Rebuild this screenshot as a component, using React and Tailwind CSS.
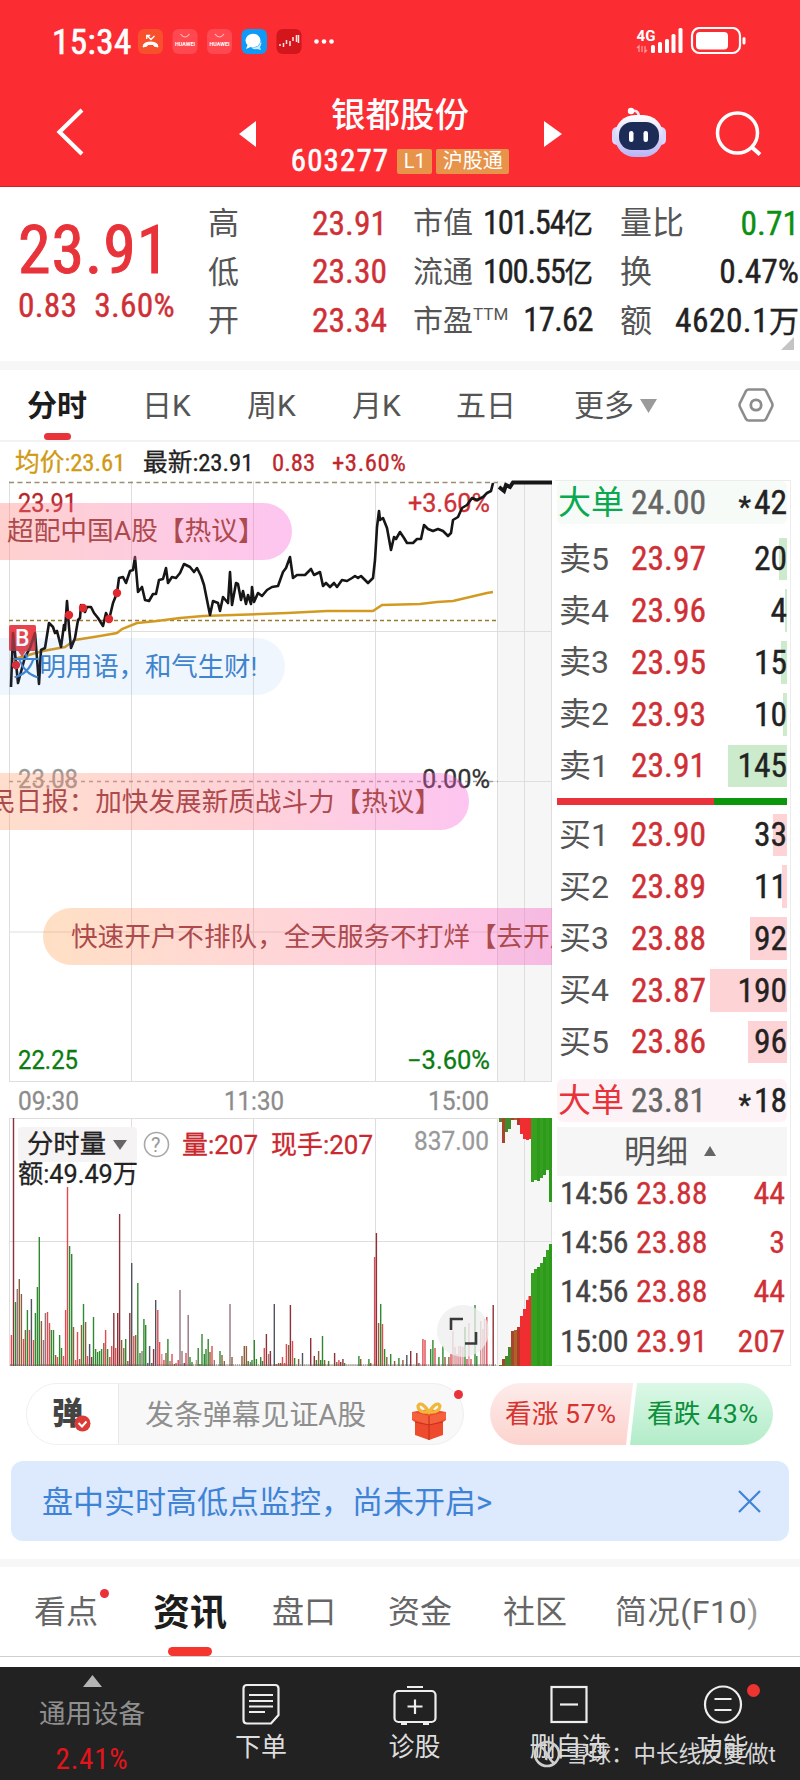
import { Fragment } from 'react';

const RED = '#c9282e';

const klineTabs = [
  { label: '日K', width: 'w-[105px]' },
  { label: '周K', width: 'w-[105px]' },
  { label: '月K', width: 'w-[104px]' },
  { label: '五日', width: 'w-[118px]' },
];

const sells = [
  { name: '卖5', price: '23.97', volume: 20, bar: 8 },
  { name: '卖4', price: '23.96', volume: 4, bar: 2 },
  { name: '卖3', price: '23.95', volume: 15, bar: 6 },
  { name: '卖2', price: '23.93', volume: 10, bar: 4 },
  { name: '卖1', price: '23.91', volume: 145, bar: 59 },
];

const buys = [
  { name: '买1', price: '23.90', volume: 33, bar: 14 },
  { name: '买2', price: '23.89', volume: 11, bar: 5 },
  { name: '买3', price: '23.88', volume: 92, bar: 37 },
  { name: '买4', price: '23.87', volume: 190, bar: 77 },
  { name: '买5', price: '23.86', volume: 96, bar: 39 },
];

const trades = [
  ['14:56', '23.88', 44],
  ['14:56', '23.88', 3],
  ['14:56', '23.88', 44],
  ['15:00', '23.91', 207],
];

const priceLine =
  '11,687 13,633 18,683 25,657 30,648 35,633 39,684 41,650 45,648 49,623 53,627 55,633 57,631 61,647 64,625 65,630 67,601 69,627 71,648 75,638 78,620 80,618 81,605 85,612 87,607 91,607 94,613 98,618 103,626 106,613 109,620 113,603 117,593 119,578 123,577 126,583 130,571 133,570 135,557 138,592 142,587 145,600 149,601 153,594 156,594 159,580 163,579 166,568 168,583 172,577 176,578 180,573 184,564 190,567 194,572 197,568 201,576 204,585 207,600 210,615 213,601 218,603 220,611 223,597 228,603 230,572 232,605 236,583 238,584 241,600 243,591 246,604 248,595 251,604 252,587 254,602 258,593 262,596 267,590 272,587 278,586 283,572 286,568 290,557 293,578 297,575 305,575 311,569 314,575 320,572 323,586 326,583 330,587 334,583 337,587 342,580 347,581 352,578 355,576 358,578 361,576 368,583 373,578 375,560 377,527 379,511 380,520 383,518 387,528 391,550 394,537 396,539 400,532 404,538 407,543 413,543 417,539 421,539 424,525 428,529 433,531 438,529 443,531 448,536 451,533 453,520 458,517 462,508 467,505 472,498 477,500 483,497 487,493 491,491 493,483';

const avgLine =
  '11,660 25,656 43,651 65,647 75,640 100,636 117,633 122,629 137,623 157,621 180,618 203,616 233,615 287,613 327,611 373,611 382,605 420,604 437,602 453,601 487,593 493,592';

const barColors = { r: '#e04a50', d: '#8e3038', g: '#2f8a2f', b: '#8a5f3a', s: '#4c5560', m: '#94757c', p: '#d98f94' };

// x, height, colour
const volumes = [
  [11.4, 31, 'r'], [13.5, 248, 'd'], [15.5, 64, 'g'], [17.3, 77, 'm'], [19.3, 87, 'b'], [21.4, 72, 'b'], [23.5, 27, 'r'], [25.4, 36, 'b'],
  [27.4, 56, 'g'], [29.4, 36, 'r'], [31.4, 67, 's'], [33.5, 26, 'r'], [35.4, 53, 'g'], [37.4, 79, 'g'], [39.3, 129, 'g'], [41.4, 45, 'b'],
  [43.5, 26, 'm'], [45.4, 53, 'm'], [47.5, 54, 'r'], [49.5, 43, 'r'], [51.4, 36, 'g'], [53.5, 36, 'g'], [55.6, 11, 'b'], [57.5, 9, 'r'],
  [59.6, 31, 'g'], [61.5, 18, 'g'], [63.5, 10, 'r'], [65.6, 56, 'r'], [67.5, 179, 'r'], [69.6, 120, 'g'], [71.7, 112, 'g'], [73.5, 39, 'b'],
  [75.6, 6, 'r'], [77.5, 34, 'r'], [79.6, 7, 'b'], [81.5, 41, 'b'], [83.5, 62, 'g'], [85.6, 44, 'b'], [87.5, 10, 'r'], [89.6, 22, 's'],
  [91.6, 9, 'd'], [93.5, 49, 'g'], [95.6, 17, 'g'], [97.6, 14, 'g'], [99.6, 15, 'g'], [101.6, 17, 'g'], [103.8, 23, 'b'], [105.6, 36, 'r'],
  [107.6, 17, 'g'], [109.8, 9, 'b'], [111.7, 20, 'r'], [113.8, 53, 'd'], [115.7, 18, 'r'], [117.7, 53, 'd'], [119.6, 152, 'd'], [121.6, 26, 'b'],
  [123.8, 18, 'b'], [125.7, 27, 'g'], [127.8, 5, 'b'], [129.8, 53, 'd'], [131.7, 103, 's'], [133.8, 30, 'r'], [135.7, 31, 'b'], [137.8, 83, 'g'],
  [140, 13, 'g'], [142, 15, 'm'], [143.9, 47, 'g'], [145.7, 41, 'g'], [147.8, 3, 's'], [149.6, 20, 's'], [151.8, 3, 's'], [153.6, 17, 'd'],
  [155.7, 66, 's'], [157.8, 56, 'r'], [159.6, 24, 'r'], [161.8, 12, 'p'], [163.9, 6, 'r'], [166, 13, 'b'], [167.9, 27, 'g'], [170, 5, 'm'],
  [172, 12, 'r'], [174.3, 2, 'g'], [176, 3, 'r'], [178.2, 6, 'r'], [180, 76, 'm'], [182, 15, 'm'], [184.3, 3, 's'], [186, 13, 'r'],
  [188.2, 51, 'm'], [190, 9, 'g'], [192, 4, 'g'], [196.4, 6, 'p'], [198.2, 18, 'g'], [200, 2, 'g'], [202, 32, 'g'], [204.3, 12, 'g'],
  [206, 17, 'g'], [208.2, 27, 'g'], [210, 14, 'b'], [212, 20, 'r'], [214.3, 6, 'm'], [220, 15, 'g'], [222, 11, 'b'], [224.3, 5, 'b'],
  [230, 62, 'm'], [232, 9, 'b'], [242, 10, 'b'], [244.3, 20, 'b'], [246.4, 20, 'b'], [248.2, 5, 'g'], [250.4, 4, 'm'], [252, 6, 'g'],
  [254.3, 26, 'g'], [256.4, 7, 'g'], [260.7, 9, 'g'], [262.5, 5, 'g'], [264.3, 18, 'r'], [266.4, 32, 'd'], [268.6, 12, 'm'], [270.4, 15, 'd'],
  [274.3, 62, 's'], [276.4, 2, 'r'], [278.6, 3, 'b'], [280.7, 3, 'b'], [282.5, 9, 'r'], [284.6, 3, 'r'], [286.4, 22, 'r'], [288.6, 21, 'b'],
  [290.4, 61, 'd'], [292.5, 25, 'r'], [294.6, 8, 'g'], [298.6, 7, 'b'], [302.5, 13, 's'], [310.7, 28, 'd'], [314.3, 10, 'd'], [316.4, 6, 'g'],
  [318.6, 15, 'b'], [320.7, 6, 'g'], [322.5, 30, 'g'], [324.6, 6, 'b'], [328.6, 5, 'g'], [334.6, 13, 'd'], [336.8, 4, 'b'], [338.9, 6, 'r'],
  [340.7, 4, 'd'], [342.9, 7, 'd'], [344.6, 3, 'g'], [358.9, 10, 'g'], [360.7, 7, 'b'], [368.9, 7, 'g'], [370.7, 3, 'b'], [374.6, 109, 'r'],
  [376.4, 133, 'd'], [378.6, 43, 'b'], [380.7, 62, 'g'], [382.5, 42, 'r'], [384.6, 17, 'g'], [386.8, 9, 'b'], [390.7, 12, 'g'], [394.6, 5, 'b'],
  [398.9, 8, 'g'], [402.9, 6, 'b'], [406.8, 11, 's'], [410.7, 15, 'd'], [416.8, 13, 'd'], [418.9, 3, 'b'], [422.9, 27, 'r'], [425, 26, 'r'],
  [430.7, 17, 'g'], [432.9, 26, 'g'], [435, 18, 'r'], [438.9, 9, 'g'], [442.9, 20, 'g'], [445, 9, 'b'], [448.9, 9, 'b'], [451, 12, 'r'],
  [452.9, 35, 'p'], [455, 19, 'p'], [457, 12, 'p'], [458.9, 20, 'p'], [460.7, 20, 'p'], [462.9, 19, 'p'], [465, 39, 'g'], [467, 7, 'r'],
  [468.9, 43, 'p'], [471, 7, 'r'], [475, 61, 'g'], [476.8, 10, 'g'], [480.7, 45, 'p'], [482.9, 37, 'p'], [484.6, 47, 'p'], [486.8, 49, 'r'],
  [493.2, 61, 'd'],
];

// x, hanging height, standing height, colour
const queue = [
  [499, 4, 1, '#5f7a2a'], [502, 25, 7, '#a8452a'], [505, 14, 10, '#3f8a2a'], [508, 11, 19, '#3f8a2a'], [511, 2, 35, '#a8452a'],
  [514, 2, 36, '#a8652a'], [517, 7, 39, '#b8352a'], [520, 16, 50, '#f02d30'], [523, 21, 57, '#f02d30'], [526, 22, 66, '#f02d30'],
  [528.5, 21, 70, '#f02d30'], [531, 64, 93, '#37a020'], [534, 62, 97, '#37a020'], [537, 63, 99, '#2c9a1a'], [540, 60, 103, '#37a020'],
  [543, 57, 109, '#2c9a1a'], [546, 52, 116, '#37a020'], [549, 84, 122, '#2c9a1a'],
];

function StatusBar() {
  return (
    <div className="flex h-[84px] items-center pl-[52px] text-white">
      <span className="w-[86px] text-[35px] tracking-[0.5px] [font-stretch:75%] [-webkit-text-stroke:0.7px]">15:34</span>
      <svg width="204" height="28" viewBox="0 0 204 28">
        <rect x="0" y="1" width="25" height="25" rx="6" fill="#f8502c" />
        <path d="M5 19 Q5 15.500 8.500 14.500 Q12.500 13.500 16.500 14.500 Q20 15.500 20 19 L16 18 L15.500 16.500 H9.500 L9 18z" fill="#fff" stroke="#fff" strokeWidth="1" strokeLinejoin="round" />
        <path d="M9 7.500 l4 4 3.500-3.500 M8.700 11 V7.500 h3.500" stroke="#fff" strokeWidth="1.300" fill="none" />
        {[34.5, 69].map((x) => (
          <g key={x}>
            <rect x={x} y="1" width="25" height="25" rx="6" fill="#ff4850" />
            <path d={`M${x + 8} 6 q4.500 6 9 0`} stroke="#ffb9bb" strokeWidth="1.200" fill="none" />
            <text x={x + 2.5} y="17.500" fontSize="5.500" fontWeight="700" fill="#fff" textLength="20" lengthAdjust="spacingAndGlyphs">HUAWEI</text>
          </g>
        ))}
        <rect x="103.500" y="1" width="25.500" height="25" rx="6" fill="#0f9af5" />
        <ellipse cx="115" cy="12.500" rx="7.500" ry="6.800" fill="#fff" />
        <path d="M110 16 l-2 5 7-3z" fill="#fff" />
        <path d="M113 19 q8 2 10 -6 q1 3 -1 6 l1 3 -4 -1 q-4 1 -6 -2z" fill="#c8ecff" />
        <rect x="138.500" y="1" width="25" height="25" rx="6" fill="#d3151c" />
        <path d="M142 18 v-2 M145.500 19 v-4 M148.500 16 v-4 M152 18 v-5 M155 13 v-4 M158.500 14 v-7 M160.500 15 v-8" stroke="#ffe3e3" strokeWidth="1.500" />
        <circle cx="178.500" cy="13.500" r="2.300" fill="#fff" />
        <circle cx="186" cy="13.500" r="2.300" fill="#fff" />
        <circle cx="193.500" cy="13.500" r="2.300" fill="#fff" />
      </svg>
      <svg className="ml-[294px]" width="112" height="30" viewBox="0 0 112 30">
        <text x="0.500" y="14" fontSize="15" fontWeight="700" fill="#fff" textLength="19" lengthAdjust="spacingAndGlyphs">4G</text>
        <path d="M3 25 v-6 l-2 2 M6 19 v6 M9 19 v6 l2-2" stroke="#ff9a9c" strokeWidth="1.300" fill="none" />
        {[[15, 18], [22, 15], [29, 12], [35.5, 7], [42.5, 1]].map(([x, y]) => (
          <rect key={x} x={x} y={y} width="4" height={26 - y} rx="1.500" fill="#fff" />
        ))}
        <rect x="56" y="1" width="48" height="25" rx="7.500" fill="none" stroke="#fff" strokeWidth="2.200" />
        <rect x="60" y="5" width="32" height="17.500" rx="4" fill="#fff" />
        <rect x="106.500" y="10" width="3" height="7.500" rx="1.500" fill="#fff" />
      </svg>
    </div>
  );
}

function TitleBar() {
  return (
    <div className="flex h-[103px] items-start text-white">
      <svg className="ml-[54px] mt-[22px]" width="32" height="52" viewBox="0 0 32 52">
        <path d="M28 4 L5.500 26 L28 48" fill="none" stroke="#fff" strokeWidth="4.200" />
      </svg>
      <svg className="ml-[153px] mt-[37px]" width="18" height="26" viewBox="0 0 18 26">
        <path d="M0 13 L17 0 V26z" fill="#fff" />
      </svg>
      <div className="ml-[29px] flex w-[228px] flex-col items-center">
        <div className="mt-[13px] text-[34.500px] font-medium leading-[36px]">银都股份</div>
        <div className="mt-[13px] flex items-center gap-1">
          <span className="mr-1 text-[31px] leading-[30px] tracking-[1.100px] [font-stretch:75%] [-webkit-text-stroke:0.6px]">603277</span>
          <span className="flex h-[25px] w-[35px] items-center justify-center rounded-xs bg-[#e8934a] text-[20px]">L1</span>
          <span className="flex h-[25px] w-[73px] items-center justify-center rounded-xs bg-[#e8934a] text-[20px]">沪股通</span>
        </div>
      </div>
      <svg className="ml-[30px] mt-[37px]" width="19" height="26" viewBox="0 0 19 26">
        <path d="M18 13 L0 0 V26z" fill="#fff" />
      </svg>
      <svg className="ml-[49px] mt-[22px]" width="54" height="52" viewBox="0 0 54 52">
        <defs>
          <linearGradient id="head" x1="0" y1="0" x2="0" y2="1">
            <stop offset="0" stopColor="#ffffff" />
            <stop offset="1" stopColor="#b9b4f5" />
          </linearGradient>
        </defs>
        <path d="M19 5 Q27 3 27 12" stroke="#f4e8f8" strokeWidth="2.500" fill="none" />
        <circle cx="19" cy="5" r="3.200" fill="#fff" />
        <rect x="0" y="21" width="10" height="18" rx="5" fill="#d9d5fb" />
        <rect x="44" y="21" width="10" height="18" rx="5" fill="#d9d5fb" />
        <rect x="3" y="9" width="48" height="42" rx="20" fill="url(#head)" />
        <rect x="7" y="16" width="40" height="28" rx="13" fill="#1d2b57" />
        <rect x="17" y="25" width="4.500" height="11" rx="2.200" fill="#fff" />
        <rect x="31.500" y="25" width="4.500" height="11" rx="2.200" fill="#fff" />
      </svg>
      <svg className="ml-[49px] mt-[26px]" width="48" height="48" viewBox="0 0 48 48">
        <circle cx="22.500" cy="23" r="20" fill="none" stroke="#fff" strokeWidth="3.500" />
        <path d="M35.500 36 L45 44.500" stroke="#fff" strokeWidth="4" />
      </svg>
    </div>
  );
}

function QuoteColumn({ className, children }) {
  return <div className={`flex h-[158px] flex-col pt-[12px] leading-none [font-stretch:75%] ${className}`}>{children}</div>;
}

function QuoteRow({ label, size, color = 'text-[#222]', children }) {
  return (
    <div className="flex flex-1 items-center justify-between">
      <span className={`flex text-[#555] ${size}`}>{label}</span>
      <span className={`[-webkit-text-stroke:0.4px] ${color}`}>{children}</span>
    </div>
  );
}

function Quote() {
  return (
    <div className="relative flex h-[174px] bg-white whitespace-nowrap">
      <div className="w-[208px] pl-[18px] text-[#e8333a]">
        <div className="mt-[31px] text-[66px] leading-[66px] tracking-[0.900px] [font-stretch:75%] [-webkit-text-stroke:1px]">23.91</div>
        <div className="mt-[4px] flex gap-[17px] text-[33.500px] leading-[36px] tracking-[0.200px] text-[#cf3036] [font-stretch:75%] [-webkit-text-stroke:0.4px]">
          <span>0.83</span>
          <span>3.60%</span>
        </div>
      </div>
      <QuoteColumn className="w-[179px] text-[33.500px]">
        <QuoteRow label="高" size="text-[31px]" color="text-[#cf3036]">23.91</QuoteRow>
        <QuoteRow label="低" size="text-[31px]" color="text-[#cf3036]">23.30</QuoteRow>
        <QuoteRow label="开" size="text-[31px]" color="text-[#cf3036]">23.34</QuoteRow>
      </QuoteColumn>
      <QuoteColumn className="ml-[26px] w-[180px] text-[32.500px]">
        <QuoteRow label="市值" size="text-[30px]"><span className="tracking-[-1.200px]">101.54</span><span className="text-[28.500px]">亿</span></QuoteRow>
        <QuoteRow label="流通" size="text-[30px]"><span className="tracking-[-1.200px]">100.55</span><span className="text-[28.500px]">亿</span></QuoteRow>
        <QuoteRow label={<>市盈<span className="text-[17px] [font-stretch:100%]">TTM</span></>} size="text-[30px]"><span className="tracking-[-0.600px]">17.62</span></QuoteRow>
      </QuoteColumn>
      <QuoteColumn className="ml-[27px] w-[179px] text-[33.500px]">
        <QuoteRow label="量比" size="text-[32px]" color="text-[#0c8f12]">0.71</QuoteRow>
        <QuoteRow label="换" size="text-[32px]">0.47%</QuoteRow>
        <QuoteRow label="额" size="text-[32px]"><span className="tracking-[0.400px]">4620.1</span><span className="text-[30px]">万</span></QuoteRow>
      </QuoteColumn>
      <svg className="absolute right-[6px] bottom-[11px]" width="13" height="13" viewBox="0 0 13 13">
        <path d="M13 0 V13 H0z" fill="#c4c4c4" />
      </svg>
    </div>
  );
}

function PeriodTabs() {
  return (
    <div className="flex h-[72px] items-center border-b-2 border-[#f2f2f2] bg-white pl-[27px] text-[30px] leading-none text-[#555]">
      <div className="relative flex h-full w-[115px] items-center pt-[2px] font-bold text-[#1d1d1d]">
        分时
        <span className="absolute bottom-0 left-[17px] h-[7px] w-[27px] rounded-full bg-[#e8333a]" />
      </div>
      {klineTabs.map((tab) => (
        <div key={tab.label} className={`pt-[2px] ${tab.width}`}>{tab.label}</div>
      ))}
      <div className="flex w-[163px] items-center gap-[6px] pt-[2px]">
        更多
        <svg width="17" height="14" viewBox="0 0 17 14"><path d="M0 0 H17 L8.500 14z" fill="#9a9a9a" /></svg>
      </div>
      <svg width="38" height="36" viewBox="0 0 38 36">
        <path d="M11.500 2.500 H26.500 Q28 2.500 29 4 L35 16 Q36 18 35 20 L29 32 Q28 33.500 26.500 33.500 H11.500 Q10 33.500 9 32 L3 20 Q2 18 3 16 L9 4 Q10 2.500 11.500 2.500z" fill="none" stroke="#8c8c8c" strokeWidth="2.600" />
        <circle cx="19" cy="18" r="5.200" fill="none" stroke="#8c8c8c" strokeWidth="2.800" />
      </svg>
    </div>
  );
}

function Label({ x, y, w, fill, size = 25, children }) {
  return (
    <text x={x} y={y} fill={fill} stroke={fill} strokeWidth="0.300" fontSize={size} textLength={w} lengthAdjust="spacingAndGlyphs">
      {children}
    </text>
  );
}

function Charts() {
  return (
    <div className="relative h-[888px] w-[552px] overflow-hidden">
      <svg className="block" width="552" height="888" viewBox="0 480 552 888">
        <rect x="498" y="481" width="54" height="600" fill="#f6f6f6" />
        <rect x="498" y="1118" width="54" height="248" fill="#f6f6f6" />
        <g stroke="#dedede" strokeWidth="1">
          {[9.5, 131.5, 253.5, 375.5, 497.5, 524.5, 551.5].map((x) => (
            <path key={x} d={`M${x} 481 V1081 M${x} 1118 V1366`} />
          ))}
          <path d="M9 631.500 H552 M9 932 H552 M9 1081.500 H552 M9 1118.500 H552 M9 1241.500 H552 M9 1365.500 H552 M490 781.500 H552" />
        </g>
        <path d="M9 482.500 H498" stroke="#9a8f70" strokeWidth="1.300" strokeDasharray="5 3.500" />
        <path d="M9 620.500 H498" stroke="#9a7a30" strokeWidth="1.500" strokeDasharray="4 3" />
        <path d="M9 781.500 H498" stroke="#a0a0a0" strokeWidth="1.300" strokeDasharray="4 4" />

        <polyline points={avgLine} fill="none" stroke="#d39a22" strokeWidth="2.500" />
        <Label x="18" y="512" w="59" fill="#b8242a">23.91</Label>
        <Label x="408" y="512" w="82" fill="#cf3036">+3.60%</Label>
        <path d="M11 625 H34 Q36 625 36 627 V649 Q36 651 34 651 H26 L22 657 L18 651 H11 Q9 651 9 649 V627 Q9 625 11 625z" fill="#e8484e" />
        <polyline points={priceLine} fill="none" stroke="#161616" strokeWidth="2.600" strokeLinejoin="round" />
        <path d="M11 625 H34 Q36 625 36 627 V649 Q36 651 34 651 H11 Q9 651 9 649 V627 Q9 625 11 625z" fill="#e8404a" fillOpacity="0.600" />
        <path d="M499 487 L504 491 L506 485 L510 487 L513 482.500 H552" fill="none" stroke="#161616" strokeWidth="4" />
        {[[69, 615], [83, 608], [109, 619], [117, 593], [16, 665]].map(([x, y]) => (
          <circle key={x} cx={x} cy={y} r="4.200" fill="#e0282e" />
        ))}
        <text x="15" y="646" fontSize="23" fontWeight="500" fill="#fff">B</text>

        <Label x="18" y="788" w="60" fill="#999">23.08</Label>
        <Label x="422" y="788" w="68" fill="#333">0.00%</Label>
        <Label x="18" y="1069" w="60" fill="#0b7d10">22.25</Label>
        <Label x="407" y="1069" w="83" fill="#0b7d10">−3.60%</Label>
        <Label x="18" y="1110" w="61" fill="#8c8c8c" size="26">09:30</Label>
        <Label x="224" y="1110" w="60" fill="#8c8c8c" size="26">11:30</Label>
        <Label x="428" y="1110" w="61" fill="#8c8c8c" size="26">15:00</Label>

        {volumes.map(([x, h, c]) => (
          <rect key={x} x={x - 0.7} y={1366 - h} width="1.400" height={h} fill={barColors[c]} />
        ))}
        <path d="M10 1365 H496" stroke="#6b5a50" strokeWidth="1.200" strokeDasharray="1.400 0.700" />
        {queue.map(([x, top, bottom, c]) => (
          <Fragment key={x}>
            <rect x={x} y="1118" width="3" height={top} fill={c} />
            <rect x={x} y={1366 - bottom} width="3" height={bottom} fill={c} />
          </Fragment>
        ))}

        <rect x="18" y="1127" width="119" height="35" rx="4" fill="#f5f3f4" />
        <Label x="27" y="1153" w="79" fill="#222" size="26">分时量</Label>
        <path d="M113 1140 H127 L120 1150z" fill="#666" />
        <circle cx="156.500" cy="1144.500" r="12" fill="none" stroke="#a8a8a8" strokeWidth="1.600" />
        <text x="151" y="1152" fontSize="20" fill="#999">?</text>
        <Label x="182" y="1154" w="76" fill={RED} size="26">量:207</Label>
        <Label x="271" y="1154" w="102" fill={RED} size="26">现手:207</Label>
        <Label x="414" y="1150" w="75" fill="#999" size="26">837.00</Label>
        <Label x="18" y="1183" w="120" fill="#222" size="26">额:49.49万</Label>

        <circle cx="463" cy="1331" r="26" fill="#eeeeee" fillOpacity="0.750" />
        <path d="M451 1330 V1319 H463 M465 1343.500 H476 V1332" fill="none" stroke="#3a3a3a" strokeWidth="2.600" />
      </svg>

      <div className="absolute top-[23px] left-0 flex h-[57px] w-[292px] items-center rounded-r-full bg-linear-to-r from-[#ff7a70]/35 to-[#f858d5]/35 pl-[7px] text-[26.700px] whitespace-nowrap text-[#ad4a4d]">
        超配中国A股【热议】
      </div>
      <div className="absolute top-[158px] left-0 flex h-[57px] w-[285px] items-center rounded-r-full bg-[#3f8ce6]/8 pt-px pl-[13px] text-[26.400px] whitespace-nowrap text-[#3f85cd]">
        文明用语，和气生财!
      </div>
      <div className="absolute top-[293px] left-0 flex h-[57px] w-[469px] items-center justify-end rounded-r-full bg-linear-to-r from-[#ff9055]/30 via-[#ff7280]/32 to-[#f858d5]/35 pt-px pr-[28px] text-[26.600px] whitespace-nowrap text-[#ad4a4d]">
        民日报：加快发展新质战斗力【热议】
      </div>
      <div className="absolute top-[428px] left-[43px] flex h-[57px] w-[509px] items-center overflow-hidden rounded-l-full bg-linear-to-r from-[#ff9c45]/32 via-[#ff7280]/30 to-[#f858c5]/38 pt-px pl-[28px] text-[26.600px] whitespace-nowrap text-[#ad4a4d]">
        快速开户不排队，全天服务不打烊【去开户】
      </div>
    </div>
  );
}

function DepthRow({ row, barClass }) {
  return (
    <div className="flex h-[51.800px] items-center py-[4.650px]">
      <div className="relative flex h-full flex-1 items-center">
        <span className={`absolute top-0 right-0 h-full ${barClass}`} style={{ width: row.bar }} />
        <span className="w-[74px] pl-[2px] text-[32px] text-[#555] [font-stretch:100%]">{row.name}</span>
        <span className="text-[#cf3036] [-webkit-text-stroke:0.4px]">{row.price}</span>
        <span className="relative ml-auto text-[#222] [-webkit-text-stroke:0.4px]">{row.volume}</span>
      </div>
    </div>
  );
}

function BigOrder({ color, bg, price, volume }) {
  return (
    <div className={`flex h-[43px] items-center rounded-md ${bg}`}>
      <span className={`w-[74px] pl-px text-[33px] ${color}`}>大单</span>
      <span className="text-[#666] [-webkit-text-stroke:0.4px]">{price}</span>
      <span className="mt-[10px] ml-auto text-[29px] text-[#222] [font-stretch:100%] [-webkit-text-stroke:0.4px]">*</span>
      <span className="ml-[3px] text-[#222] [-webkit-text-stroke:0.4px]">{volume}</span>
    </div>
  );
}

function OrderBook() {
  return (
    <div className="ml-[3px] h-[886px] w-[236px] border-t border-r border-b border-[#ececec] pr-[3px] pl-[2px] text-[33.500px] leading-none [font-stretch:75%]">
      <BigOrder color="text-[#0aa84f]" bg="bg-[#f6fbf8]" price="24.00" volume="42" />
      <div className="pt-[9px]">
        {sells.map((row) => <DepthRow key={row.name} row={row} barClass="bg-[#ccebcc]" />)}
      </div>
      <div className="mt-[6px] mb-[4px] flex h-[7px]">
        <span className="w-[157px] bg-[#e8333a]" />
        <span className="flex-1 bg-[#0c960c]" />
      </div>
      <div>
        {buys.map((row) => <DepthRow key={row.name} row={row} barClass="bg-[#fdd3d6]" />)}
      </div>
      <div className="mt-[11px]">
        <BigOrder color="text-[#e8333a]" bg="bg-[#fdf3f6]" price="23.81" volume="18" />
      </div>
      <div className="mt-[5px] flex h-[49px] items-center justify-center gap-[16px] bg-[#f6f6f6] pr-[4px] text-[32px] text-[#555]">
        <span className="pt-[2px]">明细</span>
        <svg width="12" height="10" viewBox="0 0 12 10"><path d="M6 0 L12 10 H0z" fill="#666" /></svg>
      </div>
      <div className="mt-[-8px] text-[32px]">
        {trades.map(([time, price, volume], i) => (
          <div key={i} className="flex h-[49.300px] items-center [-webkit-text-stroke:0.3px]">
            <span className="w-[79px] pl-[3px] tracking-[-0.500px] text-[#444]">{time}</span>
            <span className="text-[#cf3036]">{price}</span>
            <span className="ml-auto pr-[2px] text-[#cf3036]">{volume}</span>
          </div>
        ))}
      </div>
    </div>
  );
}

function BarrageBar() {
  return (
    <div className="flex h-[62px] items-center pl-[26px] leading-none">
      <div className="relative flex h-[62px] w-[438px] items-center rounded-full border border-[#efefef] bg-[#f8f8f8]">
        <div className="relative flex h-[60px] w-[92px] items-center rounded-l-full border-r border-[#e8e8e8] bg-white pb-[2px] pl-[25px] text-[31px] font-black text-[#444]">
          弹
          <svg className="absolute top-[31px] left-[47px]" width="17" height="17" viewBox="0 0 17 17">
            <circle cx="8.500" cy="8.500" r="8" fill="#dc3a34" />
            <path d="M4.500 8 L8 11.500 L12.500 6.500" stroke="#fff" strokeWidth="2" fill="none" />
          </svg>
        </div>
        <span className="pt-[2px] pl-[26px] text-[28.900px] text-[#8f8f8f]">发条弹幕见证A股</span>
        <svg className="absolute top-[17px] left-[383px]" width="38" height="40" viewBox="0 0 38 40">
          <path d="M2 11 L19 8 L36 11 V19 L33 21 V34 L19 39 L5 34 V21 L2 19z" fill="#ee4b2e" />
          <path d="M2 11 L19 15 L36 11 V18 L19 24 L2 18z" fill="#f4623d" />
          <path d="M19 15 V39 M5 21 L19 24 L33 21" stroke="#c8321c" strokeWidth="1.200" fill="none" />
          <path d="M19 11 Q8 12 8 5 Q11 -1 19 11 Q27 -1 30 5 Q29 12 19 11z" fill="none" stroke="#f0b73a" strokeWidth="3.200" />
        </svg>
        <span className="absolute top-[6px] right-0 h-[9px] w-[9px] rounded-full bg-[#e8333a]" />
      </div>
      <div className="relative ml-[26px] h-[62px] w-[283px] text-[26.700px]">
        <svg className="block" width="283" height="62" viewBox="0 0 283 62">
          <defs>
            <linearGradient id="up" x1="0" y1="0" x2="0" y2="1">
              <stop offset="0" stopColor="#fdeceb" />
              <stop offset="1" stopColor="#fcd3ce" />
            </linearGradient>
            <linearGradient id="down" x1="0" y1="0" x2="0" y2="1">
              <stop offset="0" stopColor="#dcf8e7" />
              <stop offset="1" stopColor="#b2ecc8" />
            </linearGradient>
          </defs>
          <path d="M31 0 H143 L136 62 H31 A31 31 0 0 1 31 0z" fill="url(#up)" />
          <path d="M147 0 H252 A31 31 0 0 1 252 62 H140z" fill="url(#down)" />
        </svg>
        <div className="absolute inset-0 flex items-center pt-px pl-[15px] whitespace-nowrap">
          <span className="w-[142px] text-[#d8342f]">看涨 <span className="tracking-[0.800px]">57%</span></span>
          <span className="text-[#0d8f3c]">看跌 <span className="tracking-[0.800px]">43%</span></span>
        </div>
      </div>
    </div>
  );
}

function NewsTabs() {
  return (
    <div className="flex h-[90px] items-center border-b border-[#cfcfcf] pl-[34px] text-[32px] leading-none text-[#666]">
      <div className="relative w-[119px] pt-px">
        看点
        <span className="absolute top-[-6px] left-[66px] h-[9px] w-[9px] rounded-full bg-[#e8333a]" />
      </div>
      <div className="relative flex h-full w-[119px] items-center pt-[3px] text-[37px] font-bold text-[#1d1d1d]">
        资讯
        <span className="absolute bottom-0 left-[15px] h-[9px] w-[44px] rounded-full bg-[#f5362f]" />
      </div>
      <span className="w-[116px] pt-px">盘口</span>
      <span className="w-[115px] pt-px">资金</span>
      <span className="w-[112px] pt-px">社区</span>
      <span className="pt-px tracking-[0.600px] whitespace-nowrap">简况(F10<span className="text-[#999]">)</span></span>
    </div>
  );
}

function NavItem({ label, width, children }) {
  return (
    <div className={`flex flex-col items-center ${width}`}>
      <svg className="mt-[15px]" width="46" height="46" viewBox="0 0 46 46" fill="none" stroke="#eee" strokeWidth="2.200">
        {children}
      </svg>
      <span className="mt-[6px] text-[26px] leading-none text-[#ddd]">{label}</span>
    </div>
  );
}

function BottomBar() {
  return (
    <div className="relative flex h-[113px] bg-[#222] leading-none">
      <div className="ml-[14px] flex w-[156px] flex-col items-center">
        <svg className="mt-[8px]" width="19" height="12" viewBox="0 0 19 12"><path d="M9.500 0 L19 12 H0z" fill="#b5b5b5" /></svg>
        <span className="mt-[14px] text-[26.500px] text-[#8f8f8f]">通用设备</span>
        <span className="mt-[18px] text-[29px] leading-[27px] tracking-[0.800px] text-[#e5141b] [font-stretch:75%]">2.41%</span>
      </div>
      <div className="flex pl-[14px]">
        <NavItem label="下单" width="w-[154px]">
          <path d="M9 3 H37 Q40.500 3 40.500 6.500 V33 L33 41.500 H9 Q5.500 41.500 5.500 38 V6.500 Q5.500 3 9 3z" />
          <path d="M11 13 H35 M11 19 H35 M11 24.500 H35 M11 30 H27" />
        </NavItem>
        <NavItem label="诊股" width="w-[153px]">
          <rect x="2.500" y="9" width="41" height="31" rx="4" />
          <path d="M15 5 H31 M23 17.500 V32 M15.500 24.500 H30.500 M9 42 H15 M31 42 H37" />
        </NavItem>
        <NavItem label="删自选" width="w-[155px]">
          <rect x="5.500" y="5" width="35" height="35" />
          <path d="M14 22.500 H32" />
        </NavItem>
        <NavItem label="功能" width="w-[153px]">
          <circle cx="23" cy="22.500" r="18" />
          <path d="M14.500 17 H31.500 M14.500 28 H31.500" />
        </NavItem>
      </div>
      <span className="absolute top-[17px] left-[747px] h-[13px] w-[13px] rounded-full bg-[#ee3431]" />
      <div className="absolute top-[73px] left-[532px] flex items-center gap-[4px] text-[22.500px] whitespace-nowrap text-[#d6d6d6]">
        <svg width="30" height="28" viewBox="0 0 30 28" fill="none" stroke="#cfcfcf" strokeWidth="2.600">
          <circle cx="15" cy="14" r="12" />
          <path d="M8 6 Q17 12 14 20 M22 5 Q11 15 22 23" />
        </svg>
        <span>雪球：中长线反复做t</span>
      </div>
    </div>
  );
}

export default function App() {
  return (
    <div className="h-[1780px] w-[800px] overflow-hidden bg-white font-[Roboto,'Noto_Sans_CJK_SC',sans-serif] leading-none">
      <div className="h-[187px] border-b border-[#c4262b] bg-[#fb2d33]">
        <StatusBar />
        <TitleBar />
      </div>
      <Quote />
      <div className="h-[9px] bg-[#f7f7f7]" />
      <PeriodTabs />
      <div className="flex h-[38px] items-center pt-[4px] pl-[15px] text-[24.700px] leading-none [font-stretch:75%] [-webkit-text-stroke:0.3px]">
        <span className="w-[128px] text-[#cf9a14]">均价:23.61</span>
        <span className="w-[129px] text-[#222]">最新:23.91</span>
        <span className="w-[60px] text-[#c0272d]">0.83</span>
        <span className="tracking-[0.600px] text-[#c0272d]">+3.60%</span>
      </div>
      <div className="flex h-[903px]">
        <Charts />
        <OrderBook />
      </div>
      <BarrageBar />
      <div className="mx-[11px] mt-[16px] flex h-[80px] items-center justify-between rounded-xl bg-[#dde9fc] pr-[28px] pl-[31px] text-[31px] text-[#3f83d6]">
        <span className="pt-[2px]">盘中实时高低点监控，尚未开启&gt;</span>
        <svg width="23" height="23" viewBox="0 0 23 23"><path d="M1 1 L22 22 M22 1 L1 22" stroke="#3f83d6" strokeWidth="2.200" /></svg>
      </div>
      <div className="mt-[18px] h-[8px] bg-[#f7f7f7]" />
      <NewsTabs />
      <div className="h-[10px]" />
      <BottomBar />
    </div>
  );
}
